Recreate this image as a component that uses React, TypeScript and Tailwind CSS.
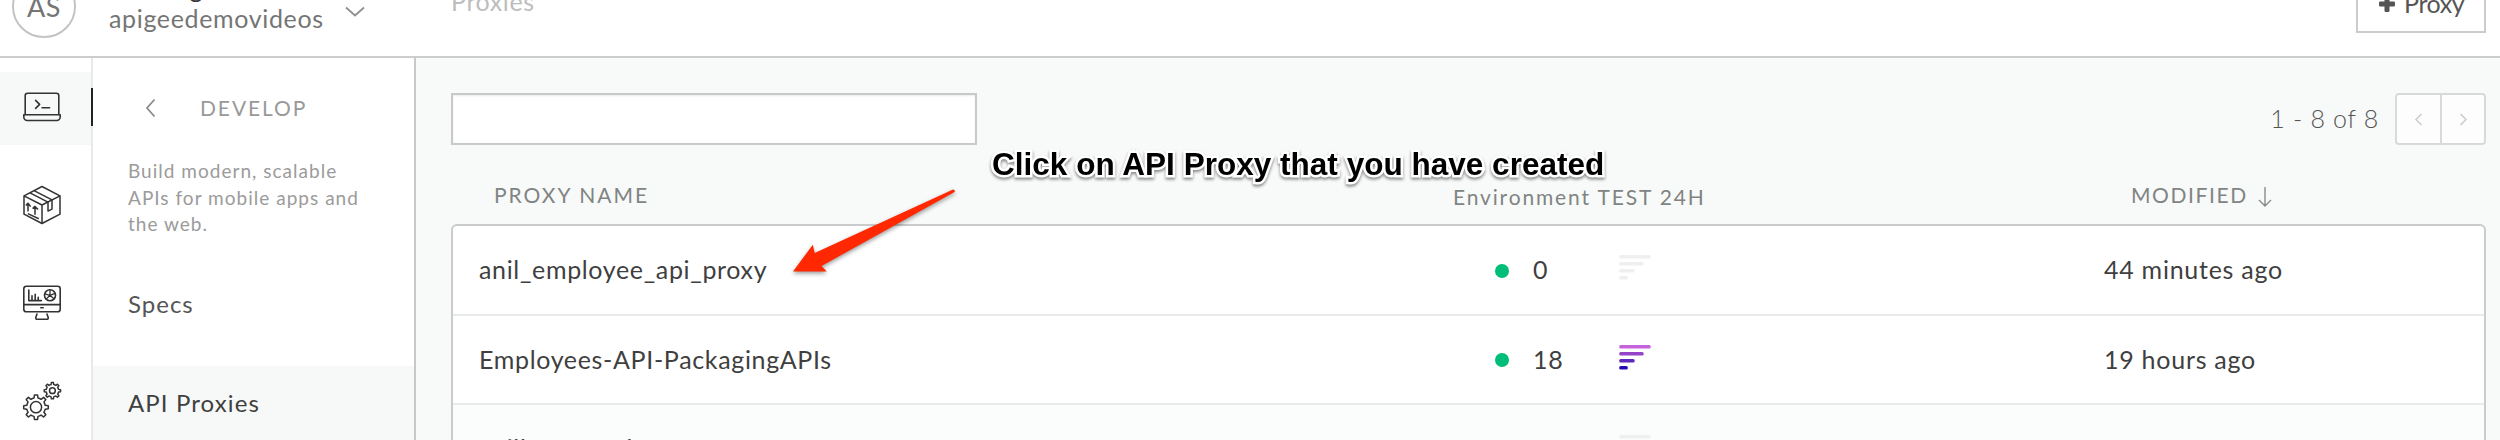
import type { ReactNode } from "react";

type Row = { name: string; traffic: string; modified: string; active?: boolean; muted?: boolean };

const rows: Row[] = [
  { name: "anil_employee_api_proxy", traffic: "0", modified: "44 minutes ago" },
  { name: "Employees-API-PackagingAPIs", traffic: "18", modified: "19 hours ago", active: true },
  { name: "anill_secure_hr", traffic: "0", modified: "Oct 17", muted: true },
];

function LaptopIcon() {
  return (
    <svg width="40" height="40" viewBox="0 0 40 40" fill="none" stroke="#333" strokeWidth="1.6" strokeLinecap="round" strokeLinejoin="round">
      <path d="M3.2 27.5V8.6a2.4 2.4 0 0 1 2.4-2.4h28.8a2.4 2.4 0 0 1 2.4 2.4v18.9" />
      <path d="M1.8 27.7h36.4v2.4a3.4 3.4 0 0 1-3.4 3.4H5.2a3.4 3.4 0 0 1-3.4-3.4z" />
      <path d="M13.6 13.4l4 4-4 4M20 20.8h7.6" />
    </svg>
  );
}

function BoxIcon() {
  return (
    <svg width="40" height="40" viewBox="0 0 40 40" fill="none" stroke="#333" strokeWidth="1.5" strokeLinejoin="round">
      <path d="M20 1.5L38 10.8v18.4L20 38.5 2 29.2V10.8z" />
      <path d="M2 10.8l18 9.2 18-9.2M20 20v18.5" />
      <path d="M8 7.8l18 9.3v9l4-2v-9.2L12 5.6" />
      <path d="M6 18.4v8.2M3.9 20.6L6 18.2l2.6 3.4M13 21.6v8.2M10.6 23.6l2.4-2.2 3 3.2M5.8 28.6l11 5.2" />
    </svg>
  );
}

function MonitorIcon() {
  return (
    <svg width="40" height="40" viewBox="0 0 40 40" fill="none" stroke="#333" strokeWidth="1.6" strokeLinecap="round" strokeLinejoin="round">
      <rect x="1.8" y="3.2" width="36.4" height="25.6" rx="2.6" />
      <path d="M1.8 21.6h36.4" />
      <path d="M18.8 24.7h2.4" />
      <path d="M15 31l-1.2 3.4a1.4 1.4 0 0 0 1.3 1.9h9.8a1.4 1.4 0 0 0 1.3-1.9L25 31" />
      <path d="M6.8 7v10.6h12.6M10 17.4v-4.6M13.2 17.4v-6.2M16.2 17.4v-3.2" />
      <circle cx="28" cy="12.3" r="5.5" />
      <path d="M28 6.8v5.5l5-2M28 12.3l4.2 3.6M28 12.3l-3.8 3.8M28 12.3l-5.2-1.4" strokeWidth="1.3" />
    </svg>
  );
}

function gearPath(cx: number, cy: number, outer: number, inner: number, teeth: number) {
  const step = (Math.PI * 2) / teeth;
  const pt = (r: number, a: number) => `${(cx + r * Math.sin(a)).toFixed(2)} ${(cy - r * Math.cos(a)).toFixed(2)}`;
  let d = "";
  for (let i = 0; i < teeth; i++) {
    const a = i * step;
    d += `${i ? "L" : "M"}${pt(inner, a - step * 0.27)}L${pt(outer, a - step * 0.16)}L${pt(outer, a + step * 0.16)}L${pt(inner, a + step * 0.27)}`;
    d += `A${inner} ${inner} 0 0 1 ${pt(inner, a + step * 0.73)}`;
  }
  return d + "Z";
}

function GearsIcon() {
  return (
    <svg width="40" height="40" viewBox="0 0 40 40" fill="none" stroke="#333" strokeWidth="1.5" strokeLinejoin="round">
      <path d={gearPath(14, 26.2, 12.4, 9.4, 8)} />
      <circle cx="14" cy="26.2" r="5.6" />
      <path d={gearPath(30.4, 9.7, 8.2, 6.3, 8)} />
      <circle cx="30.4" cy="9.7" r="2.9" />
    </svg>
  );
}

function RailItem({ children, active }: { children: ReactNode; active?: boolean }) {
  return (
    <div className={`flex h-[73px] w-full shrink-0 items-center pb-[3px] pl-[22px] ${active ? "bg-[#f7f9f8]" : ""}`}>
      {children}
      {active && <span className="-mr-[2px] ml-auto h-[38px] w-[2px] bg-[#222]" />}
    </div>
  );
}

function Bars({ active }: { active?: boolean }) {
  const colors = active ? ["#c463dc", "#9444c9", "#5c28bd", "#2a0ab4"] : ["#efefef", "#efefef", "#efefef", "#efefef"];
  return (
    <svg width="32" height="25" viewBox="0 0 32 25">
      {[31.5, 24.5, 15.5, 8.6].map((w, i) => (
        <rect key={w} x="0.2" y={i * 7} width={w} height="3.5" rx="1.5" fill={colors[i]} />
      ))}
    </svg>
  );
}

export default function App() {
  return (
    <div className="flex h-[440px] w-[2500px] flex-col overflow-hidden bg-white font-['Lato',sans-serif] text-[#3f3f3f]">
      <header className="flex h-[58px] shrink-0 items-end border-b-2 border-[#cdcdcd]">
        <div className="mb-[18px] ml-[12px] flex h-[63px] w-[64px] shrink-0 items-center justify-center rounded-full border-2 border-[#c4c4c4]">
          <span className="text-[27px] leading-none tracking-[0.5px] text-[#757575]">AS</span>
        </div>
        <div className="mb-[22px] ml-[33px] w-[236px] shrink-0">
          <div className="text-[25px] leading-[29px] tracking-[0.8px] text-[#333]">Anil Sagar</div>
          <div className="text-[25px] leading-[31px] tracking-[0.65px] text-[#757575]">apigeedemovideos</div>
        </div>
        <svg className="mb-[39px] shrink-0" width="20" height="11" viewBox="0 0 20 11" fill="none" stroke="#909090" strokeWidth="1.8">
          <path d="M1 1.5l9 8 9-8" />
        </svg>
        <div className="mb-[39px] ml-[86px] text-[25px] leading-[32px] tracking-[0.6px] text-[#bdbdbd]">Proxies</div>
        <button className="mr-[14px] mb-[23px] ml-auto flex h-[59px] w-[130px] shrink-0 items-center gap-[9px] border-2 border-[#cccccc] pl-[21px] text-[25px] tracking-[-0.4px] text-[#555]">
          <svg width="16" height="16" viewBox="0 0 16 16" fill="#555">
            <path d="M5.5 1.2Q5.5 0 6.7 0H9.3Q10.5 0 10.5 1.2V5.5H14.8Q16 5.5 16 6.7V9.3Q16 10.5 14.8 10.5H10.5V14.8Q10.5 16 9.3 16H6.7Q5.5 16 5.5 14.8V10.5H1.2Q0 10.5 0 9.3V6.7Q0 5.5 1.2 5.5H5.5Z" />
          </svg>
          <span>Proxy</span>
        </button>
      </header>

      <div className="flex min-h-0 flex-1">
        <nav className="flex w-[93px] shrink-0 flex-col gap-[25px] border-r-2 border-[#e8eae9] pt-[14px]">
          <RailItem active><LaptopIcon /></RailItem>
          <RailItem><BoxIcon /></RailItem>
          <RailItem><MonitorIcon /></RailItem>
          <RailItem><GearsIcon /></RailItem>
        </nav>

        <aside className="w-[323px] shrink-0 border-r-2 border-[#c8c8c8]">
          <div className="flex h-[100px] items-center pl-[52px]">
            <svg width="11" height="20" viewBox="0 0 11 20" fill="none" stroke="#8c8c8c" strokeWidth="1.8">
              <path d="M9.5 1.5L2 10l7.5 8.5" />
            </svg>
            <span className="ml-[44px] text-[21px] tracking-[1.9px] text-[#999]">DEVELOP</span>
          </div>
          <p className="pl-[35px] text-[19px] leading-[26.6px] tracking-[1.02px] whitespace-nowrap text-[#9b9b9b]">
            Build modern, scalable<br />APIs for mobile apps and<br />the web.
          </p>
          <div className="mt-[30px] flex h-[73px] items-center pl-[35px] text-[24px] tracking-[1px] text-[#555]">Specs</div>
          <div className="mt-[25px] flex h-[75px] items-center bg-[#f7f9f8] pl-[35px] text-[24px] tracking-[1.1px]">API Proxies</div>
        </aside>

        <main className="min-w-0 flex-1 bg-[#f8faf9] pt-[35px] pr-[14px] pl-[35px]">
          <div className="flex h-[52px] items-center">
            <input className="h-[52px] w-[526px] border-2 border-[#c8caca] bg-white shadow-[inset_0_1px_2px_rgba(0,0,0,0.08)]" />
            <span className="mr-[16px] ml-auto text-[25px] font-light tracking-[0.7px] text-[#555]">1 - 8 of 8</span>
            <div className="flex h-[52px] w-[91px] rounded-[4px] border-2 border-[#d8dada] bg-[#fdfdfd]">
              <div className="flex w-[45px] items-center justify-center border-r-2 border-[#d8dada]">
                <svg width="9" height="13" viewBox="0 0 9 13" fill="none" stroke="#ccc" strokeWidth="1.5"><path d="M7.5 1L2 6.5l5.5 5.5" /></svg>
              </div>
              <div className="flex flex-1 items-center justify-center">
                <svg width="9" height="13" viewBox="0 0 9 13" fill="none" stroke="#ccc" strokeWidth="1.5"><path d="M1.5 1L7 6.5 1.5 12" /></svg>
              </div>
            </div>
          </div>

          <div className="relative flex h-[79px] items-start pt-[37px] text-[21px] leading-[26px] tracking-[1.85px] text-[#808482]">
            <span className="w-[958px] shrink-0 pl-[43px] tracking-[2px]">PROXY NAME</span>
            <span className="mt-[2px] w-[678px] shrink-0 pl-[44px]">Environment TEST 24H</span>
            <span className="pl-[44px] tracking-[1.6px]">MODIFIED</span>
            <svg className="mt-[5px] ml-[10px]" width="14" height="21" viewBox="0 0 14 21" fill="none" stroke="#8a8a8a" strokeWidth="1.4">
              <path d="M7 0v19M1 13l6 6 6-6" />
            </svg>
            <div className="absolute top-[1px] left-[541px] text-[31.5px] leading-[36px] font-bold tracking-[0.02px] whitespace-nowrap text-black [font-family:'Liberation_Sans',sans-serif] [-webkit-text-stroke:5px_white] [filter:drop-shadow(0_2px_1.5px_rgba(0,0,0,0.45))] [paint-order:stroke_fill]">
              Click on API Proxy that you have created
            </div>
            <svg className="absolute top-[40px] left-[334px] [filter:drop-shadow(0_2px_2px_rgba(0,0,0,0.4))]" width="180" height="95" viewBox="785 185 180 95">
              <path d="M793 271.6L812.8 244.7L814.7 253L953 189.6Q955.5 189.8 954.6 192L821.5 266L826.8 271.6Z" fill="#ff2800" />
            </svg>
          </div>

          <div className="h-[300px] rounded-[6px] border-2 border-[#c9cccb] bg-white">
            {rows.map((r) => (
              <div
                key={r.name}
                className={`flex items-center border-b-2 border-[#e9ebea] pl-[26px] text-[25px] tracking-[0.66px] ${r.muted ? "h-[90px] bg-[#fbfdfc]" : "h-[89.5px]"}`}
              >
                <span className="w-[1016px] shrink-0">{r.name}</span>
                <span className="mt-[2px] h-[14px] w-[14px] shrink-0 rounded-full bg-[#00bd78]" />
                <span className="ml-[24px] w-[86px] shrink-0">{r.traffic}</span>
                <span className="-mt-[4px] w-[485px] shrink-0"><Bars active={r.active} /></span>
                <span className="tracking-[0.74px]">{r.modified}</span>
              </div>
            ))}
          </div>
        </main>
      </div>
    </div>
  );
}
